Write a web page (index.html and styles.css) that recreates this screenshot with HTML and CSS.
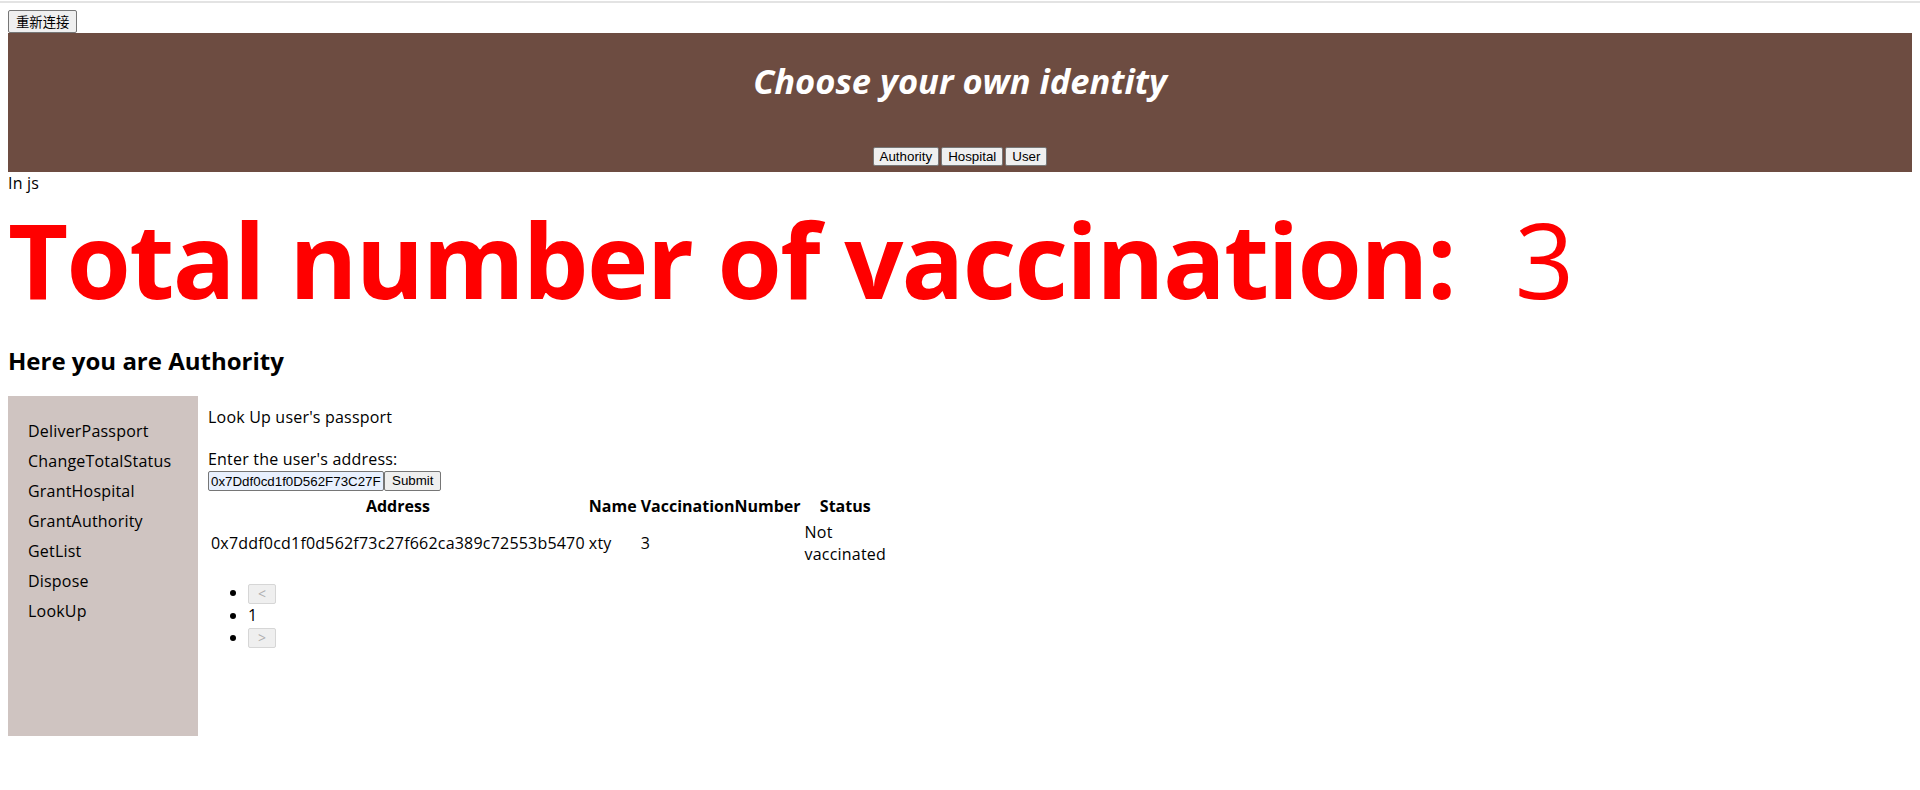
FILE: index.html
```html
<!DOCTYPE html>
<html lang="zh">
<head>
<meta charset="utf-8">
<title>Vaccination</title>
<link rel="stylesheet" href="styles.css">
</head>
<body>
<div class="topline"></div>
<div class="page">
  <button class="reconnect">重新连接</button>
  <header class="identity">
    <h1 class="identity-title">Choose your own identity</h1>
    <div class="identity-buttons">
      <button class="btn">Authority</button>
      <button class="btn">Hospital</button>
      <button class="btn">User</button>
    </div>
  </header>
  <div class="note">In js</div>
  <h1 class="total"><b>Total number of vaccination:</b><span class="count">3</span></h1>
  <h2 class="role">Here you are Authority</h2>
  <div class="main">
    <nav class="sidebar">
      <ul class="menu">
        <li>DeliverPassport</li>
        <li>ChangeTotalStatus</li>
        <li>GrantHospital</li>
        <li>GrantAuthority</li>
        <li>GetList</li>
        <li>Dispose</li>
        <li>LookUp</li>
      </ul>
    </nav>
    <section class="content">
      <p class="section-title">Look Up user's passport</p>
      <div class="label">Enter the user's address:</div>
      <div class="form-row">
        <input class="addr-input" type="text" value="0x7Ddf0cd1f0D562F73C27F662CA389C72553b5470">
        <button class="btn submit">Submit</button>
      </div>
      <table class="result">
        <thead>
          <tr><th>Address</th><th>Name</th><th>VaccinationNumber</th><th>Status</th></tr>
        </thead>
        <tbody>
          <tr><td>0x7ddf0cd1f0d562f73c27f662ca389c72553b5470</td><td>xty</td><td>3</td><td>Not vaccinated</td></tr>
        </tbody>
      </table>
      <ul class="pager">
        <li><button class="page-btn" disabled>&lt;</button></li>
        <li>1</li>
        <li><button class="page-btn" disabled>&gt;</button></li>
      </ul>
    </section>
  </div>
</div>
</body>
</html>
```
FILE: styles.css
```css
html, body {
  margin: 0;
  padding: 0;
  background: #ffffff;
}
body {
  font-family: "Open Sans", "Noto Sans CJK SC", sans-serif;
  font-size: 16px;
  letter-spacing: 0.2px;
  color: #000;
}
.topline {
  height: 2px;
  margin-top: 1px;
  background: #e3e3e3;
}
.page {
  padding: 7px 8px 8px;
}
.reconnect {
  display: block;
  height: 23px;
  margin: 0;
  padding: 0 7px;
  font-family: "Noto Sans CJK SC", sans-serif;
  font-size: 13.33px;
  letter-spacing: 0;
  color: #000;
  background: #efefef;
  border: 1px solid #767676;
  border-radius: 2px;
}
.identity {
  box-sizing: border-box;
  height: 139px;
  background: #6d4c41;
  display: flex;
  flex-direction: column;
  align-items: center;
  padding: 24px 0 6px;
}
.identity-title {
  margin: 0;
  font-size: 34.5px;
  font-weight: 700;
  font-style: italic;
  letter-spacing: 0;
  color: #ffffff;
  line-height: normal;
}
.identity-buttons {
  margin-top: auto;
  display: flex;
  gap: 2px;
}
.btn {
  height: 19px;
  margin: 0;
  padding: 0 6px;
  font-family: "Liberation Sans", Arial, sans-serif;
  font-size: 13.33px;
  letter-spacing: 0;
  color: #000;
  background: #efefef;
  border: 1px solid #767676;
  border-radius: 2px;
  line-height: 16px;
}
.note {
  line-height: normal;
}
.total {
  margin: 0;
  font-size: 104px;
  letter-spacing: -1.7px;
  color: #ff0000;
  font-weight: 400;
  line-height: 130px;
  white-space: nowrap;
}
.total b {
  font-weight: 700;
}
.count {
  margin-left: 60px;
  letter-spacing: 0;
}
.role {
  margin: 20px 0 19px;
  font-size: 24px;
  font-weight: 700;
  letter-spacing: 0;
  line-height: normal;
}
.main {
  display: flex;
  align-items: flex-start;
}
.sidebar {
  width: 190px;
  height: 340px;
  flex: none;
  background: #cfc4c1;
}
.menu {
  list-style: none;
  margin: 0;
  padding: 20px 0 0 20px;
}
.menu li {
  line-height: 30px;
}
.content {
  padding: 10px 0 0 10px;
}
.section-title {
  margin: 0 0 20px;
  line-height: normal;
}
.label {
  line-height: normal;
}
.form-row {
  display: flex;
  margin-top: 1px;
}
.addr-input {
  box-sizing: border-box;
  width: 176px;
  height: 20px;
  margin: 0;
  padding: 0 2px;
  font-family: "Liberation Sans", Arial, sans-serif;
  font-size: 13.33px;
  letter-spacing: 0;
  color: #000;
  background: #e8f0fe;
  border: 1px solid #767676;
  border-radius: 2px;
}
.submit {
  height: 20px;
  padding: 0 7px;
}
.result {
  margin-top: 1px;
  width: 1px;
  border-spacing: 2px;
}
.result th, .result td {
  padding: 1px;
  line-height: normal;
}
.result th {
  font-weight: 700;
  letter-spacing: 0;
  text-align: center;
}
.result td {
  text-align: left;
}
.pager {
  margin: 13px 0 0;
  padding-left: 40px;
  list-style: disc;
}
.pager li {
  line-height: normal;
}
.page-btn {
  box-sizing: border-box;
  width: 28px;
  height: 20px;
  margin: 0;
  padding: 0;
  vertical-align: middle;
  font-family: "Open Sans", sans-serif;
  font-size: 14px;
  letter-spacing: 0;
  line-height: 16px;
  color: #b0b0b0;
  background: #efefef;
  border: 1px solid #d6d6d6;
  border-radius: 2px;
}
```
